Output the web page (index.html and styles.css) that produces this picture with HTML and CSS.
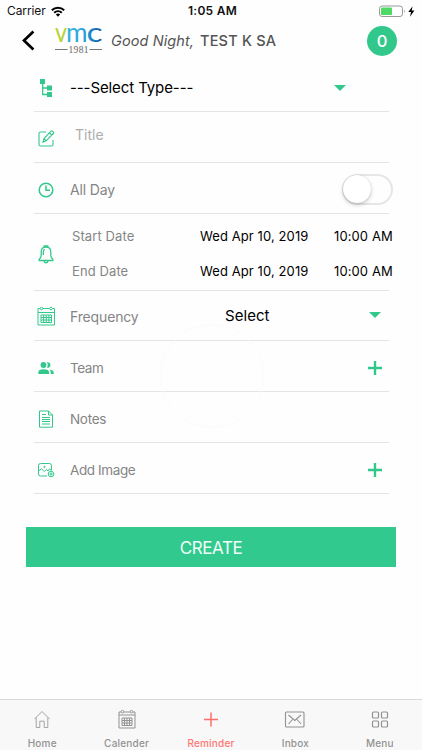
FILE: index.html
```html
<!DOCTYPE html>
<html lang="en">
<head>
<meta charset="utf-8">
<title>Reminder</title>
<link rel="stylesheet" href="styles.css">
</head>
<body>
<div class="app">
  <div class="status">
    <div class="status-left"><span class="carrier">Carrier</span>
      <svg width="14" height="11" viewBox="0 0 14 11" fill="none" stroke="#000" stroke-width="2"><path d="M.8 4.2a9 9 0 0 1 12.4 0M3.2 6.7a5.5 5.5 0 0 1 7.6 0"/><path d="M7 10.8 4.8 8.6a3.2 3.2 0 0 1 4.4 0z" fill="#000" stroke="none"/></svg>
    </div>
    <span class="clock">1:05 AM</span>
    <div class="status-right">
      <svg width="38" height="13" viewBox="0 0 38 13"><rect x=".5" y="1" width="23" height="10.5" rx="2.6" fill="#fff" stroke="#999"/><rect x="2" y="2.6" width="11" height="7.3" rx="1" fill="#4cd964"/><path d="M25 4.5q1.6 1.7 0 3.5z" fill="#999"/><path d="M33.6 1.2 29.3 7h2.7l-1 4.7L35.400 5.600h-2.700z" fill="#000"/></svg>
    </div>
  </div>
  <header class="header">
    <svg class="back" width="13" height="21" viewBox="0 0 13 21" fill="none" stroke="#000" stroke-width="2.7"><path d="M11.400 1.500 2 10.500l9.400 9"/></svg>
    <svg class="logo" width="48" height="32" viewBox="0 0 48 32">
      <defs><linearGradient id="brand" gradientUnits="userSpaceOnUse" x1="12" y1="0" x2="47" y2="0"><stop offset="0" stop-color="#32b5d8"/><stop offset=".5" stop-color="#27a0dc"/><stop offset="1" stop-color="#1552a0"/></linearGradient></defs>
      <g class="logo-name"><text x="0" y="16.500" textLength="12" lengthAdjust="spacingAndGlyphs" fill="#b5d334">v</text><text x="11" y="16.500" textLength="21.500" lengthAdjust="spacingAndGlyphs" fill="url(#brand)">m</text><text x="31.500" y="16.500" textLength="16" lengthAdjust="spacingAndGlyphs" fill="url(#brand)">c</text></g>
      <path d="M0 24.500h12.500M34.500 24.500H47" stroke="#777" stroke-width="1"/>
      <text class="logo-year" x="13.500" y="28" textLength="20" lengthAdjust="spacing">1981</text>
    </svg>
    <span class="greet">Good Night,</span><span class="user">TEST K SA</span>
    <span class="count">0</span>
  </header>

  <main class="form">
    <div class="row">
      <svg class="icon type-icon" width="24" height="24" viewBox="0 0 24 24" fill="#32c88c"><path d="M6 3h5v5H6zM13 9.500h5v5h-5zM13 16h5v5h-5z"/><path d="M8.700 7v11.500H14M8.700 12H14" fill="none" stroke="#32c88c" stroke-width="1.300"/></svg>
      <span class="select type">---Select Type---</span><i class="caret caret-type"></i>
    </div>
    <div class="row">
      <svg class="icon low" width="24" height="24" viewBox="0 0 24 24" fill="none" stroke="#32c88c" stroke-width="1.100"><path d="M12 5H6.500Q5 5 5 6.500v11Q5 19 6.500 19h11q1.500 0 1.500-1.500V13M9 15l1-3.500 7-7.300q.8-.7 1.600 0l.7.7q.8.8 0 1.600l-7.100 7.300zM15.500 5.800l2.300 2.300M10 11.500l2.200 2.300"/></svg>
      <span class="placeholder">Title</span>
    </div>
    <div class="row">
      <svg class="icon up" width="24" height="24" viewBox="0 0 24 24" fill="none" stroke="#32c88c" stroke-width="1.500"><circle cx="12" cy="12" r="6.800"/><path d="M12 7.500v4.800h4"/></svg>
      <span class="label allday">All Day</span><span class="toggle"><i></i></span>
    </div>
    <div class="row dates">
      <svg class="icon bell" width="24" height="24" viewBox="0 0 24 24" fill="none" stroke="#32c88c" stroke-width="1.300"><path d="M10.200 5.200V3.800h3.600v1.400M5.200 18.500v-1.200q2-1.500 2-4V10q0-4.800 4.800-4.800t4.800 4.800v3.300q0 2.500 2 4v1.200zM9.300 13v-3q0-2 1.500-2.800M10 19q.5 1.800 2 1.800t2-1.800"/></svg>
      <div class="date-grid">
        <span class="label start">Start Date</span><span class="date">Wed Apr 10, 2019</span><span class="time">10:00 AM</span>
        <span class="label end">End Date</span><span class="date">Wed Apr 10, 2019</span><span class="time">10:00 AM</span>
      </div>
    </div>
    <div class="row short">
      <svg class="icon" width="24" height="24" viewBox="0 0 24 24" fill="none" stroke="#32c88c" stroke-width="1"><path d="M6 4.500H4V21h16.500V4.500h-2M9 4.500h6.500M4 8.500h16.500M7 11h10.500v7.500H7zM9.600 11v7.500M12.200 11v7.500M14.900 11v7.500M7 13.500h10.500M7 16h10.500"/><circle cx="7.500" cy="4.500" r="1.300"/><circle cx="17" cy="4.500" r="1.300"/></svg>
      <span class="label frequency">Frequency</span><span class="select freq-value">Select</span><i class="caret caret-freq"></i>
    </div>
    <div class="row">
      <svg class="icon team-icon" width="24" height="24" viewBox="0 0 24 24" fill="#32c88c"><circle cx="9.500" cy="9" r="2.900"/><path d="M4.300 18v-1.600q0-3.200 5.400-3.200t5.400 3.200V18zM13 6.200q3.400-.3 3.400 2.800T13 11.800q1.700-2.800 0-5.600zM15.300 13.400q4.400.5 4.400 3V18h-3v-1.800q0-1.700-1.400-2.800z"/></svg>
      <span class="label team">Team</span>
      <svg class="plus" width="14" height="14" viewBox="0 0 14 14" stroke="#32c88c" stroke-width="2.400"><path d="M7 0v14M0 7h14"/></svg>
    </div>
    <div class="row">
      <svg class="icon up-2" width="24" height="24" viewBox="0 0 24 24" fill="none" stroke="#32c88c" stroke-width="1"><path d="M5.500 4h9l4 4v12.200h-13zM14.500 4v4h4M8 7.500h4M8 10.500h8M8 12.500h8M8 14.500h8M8 17h8"/></svg>
      <span class="label notes">Notes</span>
    </div>
    <div class="row">
      <svg class="icon up-2" width="24" height="24" viewBox="0 0 24 24" fill="none" stroke="#32c88c" stroke-width="1"><path d="M13 18H6.500Q4.500 18 4.500 16V7.500Q4.500 5.500 6.500 5.500h9q2 0 2 2V12M4.500 13l3-2.300 2.800 2.800 2-2 1.700 1.500 1.500-2 2 1.600"/><circle cx="10.500" cy="8.900" r=".7"/><circle cx="17" cy="16" r="2.800"/><path d="M17 14.300v3.400M15.300 16h3.400"/></svg>
      <span class="label image">Add Image</span>
      <svg class="plus" width="14" height="14" viewBox="0 0 14 14" stroke="#32c88c" stroke-width="2.400"><path d="M7 0v14M0 7h14"/></svg>
    </div>
    <i class="ripple"></i>
  </main>
  <button class="create"><span>CREATE</span></button>

  <nav class="tabs">
    <div class="tab"><svg width="24" height="24" viewBox="0 0 24 24" fill="none" stroke="#a4a4a4" stroke-width="1"><path d="M4.500 12 12 4.500l7.500 7.500M6.200 10.700v9.800h3.600v-6.300h4.400v6.300h3.600v-9.800"/></svg><span>Home</span></div>
    <div class="tab"><svg width="24" height="24" viewBox="0 0 24 24" fill="none" stroke="#929292" stroke-width="1"><path d="M6 5H4v16h16V5h-2M9 5h6M4 8h16M7 11h10v7.500H7zM9.500 11v7.500M12 11v7.500M14.500 11v7.500M7 13.500h10M7 16h10"/><circle cx="7.500" cy="4.700" r="1.300"/><circle cx="16.500" cy="4.700" r="1.300"/></svg><span>Calender</span></div>
    <div class="tab active"><svg width="24" height="24" viewBox="0 0 24 24" stroke="#ff6e6b" stroke-width="1.500"><path d="M12 5.500v14M5 12.500h14"/></svg><span>Reminder</span></div>
    <div class="tab"><svg width="24" height="24" viewBox="0 0 24 24" fill="none" stroke="#929292" stroke-width="1.100"><rect x="2.500" y="5" width="18.500" height="15" rx="1"/><path d="m5.500 8 6.300 5.500L18 8M5.500 17l4-4.500M18 17l-4-4.500"/></svg><span>Inbox</span></div>
    <div class="tab"><svg width="24" height="24" viewBox="0 0 24 24" fill="none" stroke="#929292" stroke-width="1.200"><rect x="4.500" y="5" width="6" height="6" rx="1"/><rect x="13.500" y="5" width="6" height="6" rx="1"/><rect x="4.500" y="14" width="6" height="6" rx="1"/><rect x="13.500" y="14" width="6" height="6" rx="1"/></svg><span>Menu</span></div>
  </nav>
</div>
</body>
</html>
```
FILE: styles.css
```css
* { box-sizing: border-box; }
body { margin: 0; background: #fefefe; font-family: Inter, "Liberation Sans", sans-serif; color: #111; }
.app { width: 422px; height: 750px; display: flex; flex-direction: column; overflow: hidden; white-space: nowrap; }
svg { display: block; flex: none; }

.status { height: 22px; display: grid; grid-template-columns: 1fr auto 1fr; align-items: center; padding: 0 5px 0 7px; font-size: 12px; line-height: 22px; }
.status-left { display: flex; align-items: center; gap: 6px; }
.carrier { letter-spacing: -.1px; }
.status-left svg { margin-left: -1px; }
.clock { font-weight: 600; letter-spacing: .25px; margin-left: 1px; }
.status-right { display: flex; justify-content: flex-end; }

.header { height: 39px; display: flex; align-items: flex-start; padding-left: 22px; }
.back { margin-top: 8px; }
.logo { margin: 3px 0 0 20px; overflow: visible; }
.logo-name { font: 400 27px Lato, sans-serif; }
.logo-year { font: 9.500px "Liberation Serif", serif; fill: #666; }
.greet, .user { line-height: 38px; font-size: 14.500px; color: #555; }
.greet { margin-left: 8px; width: 89px; font-style: italic; letter-spacing: .1px; }
.user { font-weight: 500; letter-spacing: .2px; }
.count { width: 30px; height: 30px; margin: 4px 25px 0 auto; border-radius: 50%; background: #32c88c; color: #fff; font-size: 16.500px; font-weight: 500; line-height: 30px; text-align: center; }

.form { position: relative; margin: 0 33px 0 34px; }
.row { height: 51px; border-bottom: 1px solid #e4e4e4; display: flex; align-items: center; }
.row.short { height: 50px; }
.row.dates { height: 77px; }
.icon { margin-right: 12px; }
.type-icon { margin-top: 4px; }
.icon.low { margin-top: 3px; }
.icon.up { margin-top: 3px; }
.icon.up-2 { margin-top: 4px; }
.team-icon { margin-top: 3px; }
.bell { margin-top: 4px; }
.label { font-size: 14px; line-height: 20px; color: #858585; padding-top: 3px; letter-spacing: -.15px; }
.team, .notes, .image { font-size: 13.500px; letter-spacing: -.3px; }
.team { letter-spacing: -.4px; }
.image { letter-spacing: -.4px; }
.placeholder { margin: -5px 0 0 5px; font-size: 14px; line-height: 20px; color: #adadad; }
.select { font-size: 15px; line-height: 20px; letter-spacing: .05px; color: #000; }
.type { width: 264px; padding-top: 4px; letter-spacing: -.1px; }
.caret { border: 6px solid transparent; border-top: 6px solid #32c88c; border-bottom: 0; }
.caret-type { margin-top: 4px; }
.freq-value { margin: 0 0 0 auto; width: 144px; }
.caret-freq { margin: -2px 8px 0 0; }
.plus { margin: 3px 7px 0 auto; }
.toggle { margin: 3px -4px 0 auto; width: 51px; height: 31px; border: 2px solid #e6e6e6; border-radius: 16px; }
.toggle i { display: block; width: 28px; height: 28px; margin: -1px 0 0 -1px; border-radius: 50%; background: #fff; box-shadow: 0 2px 4px #0003, 0 0 1px #0003; }
.date-grid { display: grid; grid-template-columns: 128px 134px 60px; row-gap: 15px; margin-left: 2px; font-size: 13px; line-height: 20px; padding-top: 3px; letter-spacing: .1px; color: #000; }
.date-grid .label { font-size: 13px; padding: 0; letter-spacing: .1px; }
.ripple { position: absolute; left: 126px; top: 263px; width: 104px; height: 104px; border: 1px solid #fdfafa; border-radius: 50%; }

.create { margin: 33px 26px 0; height: 40px; border: 0; padding: 2px 0 0; background: #32c98e; color: #effff8; font: 17px/38px Inter, sans-serif; letter-spacing: -.4px; }

.tabs { margin-top: auto; height: 51px; background: #f8f8f8; border-top: 1px solid #d9d9d9; display: grid; grid-template-columns: repeat(5, 1fr); }
.tab { display: flex; flex-direction: column; align-items: center; padding-top: 7px; font-size: 10px; font-weight: 500; line-height: 14px; color: #929292; letter-spacing: .2px; }
.tab span { margin-top: 5px; }
.active { color: #ff7774; }
```
